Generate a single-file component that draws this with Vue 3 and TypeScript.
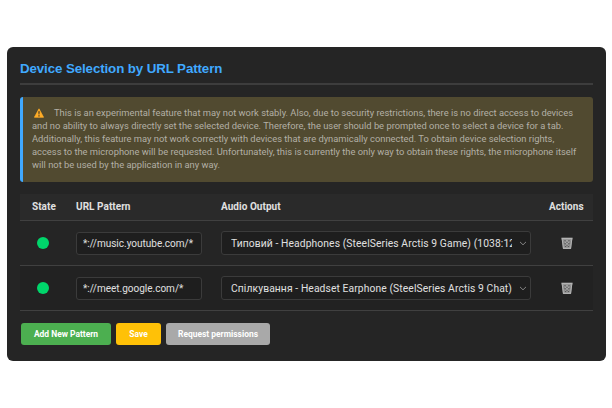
<script setup lang="ts">
import { ref } from 'vue'

interface PatternRow {
  id: number
  pattern: string
  output: string
}

const notice: string[] = [
  'This is an experimental feature that may not work stably. Also, due to security restrictions, there is no direct access to devices',
  'and no ability to always directly set the selected device. Therefore, the user should be prompted once to select a device for a tab.',
  'Additionally, this feature may not work correctly with devices that are dynamically connected. To obtain device selection rights,',
  'access to the microphone will be requested. Unfortunately, this is currently the only way to obtain these rights, the microphone itself',
  'will not be used by the application in any way.',
]

const rows = ref<PatternRow[]>([
  { id: 1, pattern: '*://music.youtube.com/*', output: 'Типовий - Headphones (SteelSeries Arctis 9 Game) (1038:12' },
  { id: 2, pattern: '*://meet.google.com/*', output: 'Спілкування - Headset Earphone (SteelSeries Arctis 9 Chat)' },
])
</script>

<template>
  <main class="page">
    <section class="panel">
      <h2 class="title">Device Selection by URL Pattern</h2>
      <div class="notice">
        <div v-for="(line, i) in notice" :key="i" class="line">
          <svg v-if="i === 0" class="warn" viewBox="0 0 10 10">
            <path d="M5 0.8 L9.6 9.3 H0.4 Z" fill="#ffad27" stroke="#ffad27" stroke-width="0.7" stroke-linejoin="round" />
            <path d="M4.3 3.3 H5.7 L5.4 6.6 H4.6 Z M4.4 7.3 H5.6 V8.4 H4.4 Z" fill="#3c3424" />
          </svg>
          <span>{{ line }}</span>
        </div>
      </div>
      <div class="table">
        <div class="row head">
          <span class="state">State</span>
          <span>URL Pattern</span>
          <span>Audio Output</span>
          <span class="actions">Actions</span>
        </div>
        <div v-for="row in rows" :key="row.id" class="row entry">
          <span class="dot"></span>
          <input v-model="row.pattern" class="pattern" type="text" spellcheck="false" />
          <div class="select">
            <span class="value">{{ row.output }}</span>
            <svg class="chevron" viewBox="0 0 8 5"><path d="M1 0.9 L4 3.8 L7 0.9" fill="none" stroke="#858585" stroke-width="1" /></svg>
          </div>
          <button class="trash" aria-label="Delete">
            <svg viewBox="0 0 12 13">
              <path d="M1 1.3 H11 L9.9 12 H2.1 Z" fill="#8b8b8b" />
              <path d="M0.4 0.7 H11.6 V2.3 H0.4 Z" fill="#b4b4b4" />
              <path d="M1.2 2 L2.4 11.5 M10.8 2 L9.6 11.5 M2.2 11.4 H9.8" fill="none" stroke="#b2b2b2" stroke-width="1.1" />
              <path d="M2.7 3 L8.8 10.5 M5.2 3 L9.2 7.5 M9.3 3 L3.2 10.5 M6.8 3 L2.8 7.5" fill="none" stroke="#b9b9b9" stroke-width="0.5" />
              <path d="M3.4 3.2 H4.5 V4.2 H3.4 Z M7.5 3.2 H8.6 V4.2 H7.5 Z M5.5 4.7 H6.5 V5.8 H5.5 Z M3.5 6.1 H4.5 V7.2 H3.5 Z M7.5 6.1 H8.5 V7.2 H7.5 Z M5.5 7.7 H6.5 V8.8 H5.5 Z M3.9 9 H4.8 V10 H3.9 Z M7.2 9 H8.1 V10 H7.2 Z" fill="#484848" />
            </svg>
          </button>
        </div>
      </div>
      <div class="buttons">
        <button class="btn add">Add New Pattern</button>
        <button class="btn save">Save</button>
        <button class="btn request">Request permissions</button>
      </div>
    </section>
  </main>
</template>

<style>
body {
  background: #fff;
}
</style>

<style scoped>
.page {
  box-sizing: border-box;
  width: 612px;
  height: 408px;
  padding: 47px 6px 47px 7px;
  overflow: hidden;
  font-family: Roboto, "Liberation Sans", Arial, sans-serif;
  color: #e0e0e0;
}
.panel {
  box-sizing: border-box;
  height: 314px;
  padding: 13px 13px 0;
  border-radius: 6px;
  background: #252525;
}
.title {
  box-sizing: border-box;
  height: 25px;
  margin: 0 0 12px;
  border-bottom: 2px solid #3d3d3d;
  font-family: "Liberation Sans", Arial, sans-serif;
  font-size: 13.33px;
  letter-spacing: -0.11px;
  line-height: 18px;
  color: #40a9ff;
}
.notice {
  box-sizing: border-box;
  height: 85px;
  padding: 8.8px 0 0 9px;
  border-left: 3px solid #40a9ff;
  border-radius: 3px;
  background: #514a30;
  color: #b3b0a6;
  font-size: 9.35px;
  line-height: 13.1px;
}
.line {
  display: flex;
  align-items: center;
  height: 13.1px;
  white-space: nowrap;
}
.warn {
  width: 10px;
  height: 10px;
  margin: 1px 10px 0 2px;
}
.table {
  margin-top: 12px;
}
.row {
  display: grid;
  box-sizing: border-box;
  grid-template-columns: 56px 145px 310px 62px;
  align-items: center;
  border-bottom: 1px solid #404040;
}
.head {
  height: 27px;
  background: #2a2a2a;
  font-size: 10px;
  font-weight: 700;
  letter-spacing: 0.04px;
  line-height: 12px;
}
.state {
  padding-left: 12px;
}
.actions {
  padding-left: 18px;
}
.entry {
  height: 45px;
}
.entry:last-child {
  background: #222;
}
.dot {
  width: 12px;
  height: 12px;
  margin-left: 17px;
  border-radius: 50%;
  background: #00d66b;
}
.pattern {
  box-sizing: border-box;
  width: 126px;
  height: 23px;
  padding: 0 6px;
  border: 1px solid #3b3b3b;
  border-radius: 3px;
  outline: none;
  background: #1e1e1e;
  color: #e0e0e0;
  font: 10px Roboto, "Liberation Sans", Arial, sans-serif;
}
.select {
  display: flex;
  box-sizing: border-box;
  align-items: center;
  justify-content: space-between;
  width: 310px;
  height: 24px;
  padding: 0 3px 0 9px;
  border: 1px solid #3b3b3b;
  border-radius: 3px;
  background: #1e1e1e;
  font-size: 10.3px;
  letter-spacing: 0.1px;
}
.value {
  width: 281px;
  overflow: hidden;
  white-space: nowrap;
}
.chevron {
  width: 8px;
  height: 5px;
}
.trash {
  width: 12px;
  height: 13px;
  margin: 1px 0 0 30px;
  padding: 0;
  border: 0;
  background: none;
}
.trash svg {
  display: block;
  width: 12px;
  height: 13px;
}
.buttons {
  display: flex;
  gap: 5px;
  margin: 12px 0 0 1px;
}
.btn {
  height: 22px;
  padding: 0;
  border: 0;
  border-radius: 3px;
  color: #fff;
  font: 700 8.45px Roboto, "Liberation Sans", Arial, sans-serif;
}
.add {
  width: 90px;
  background: #4caf50;
}
.save {
  width: 45px;
  background: #ffc107;
}
.request {
  width: 104px;
  background: #a9a9a9;
}
</style>
